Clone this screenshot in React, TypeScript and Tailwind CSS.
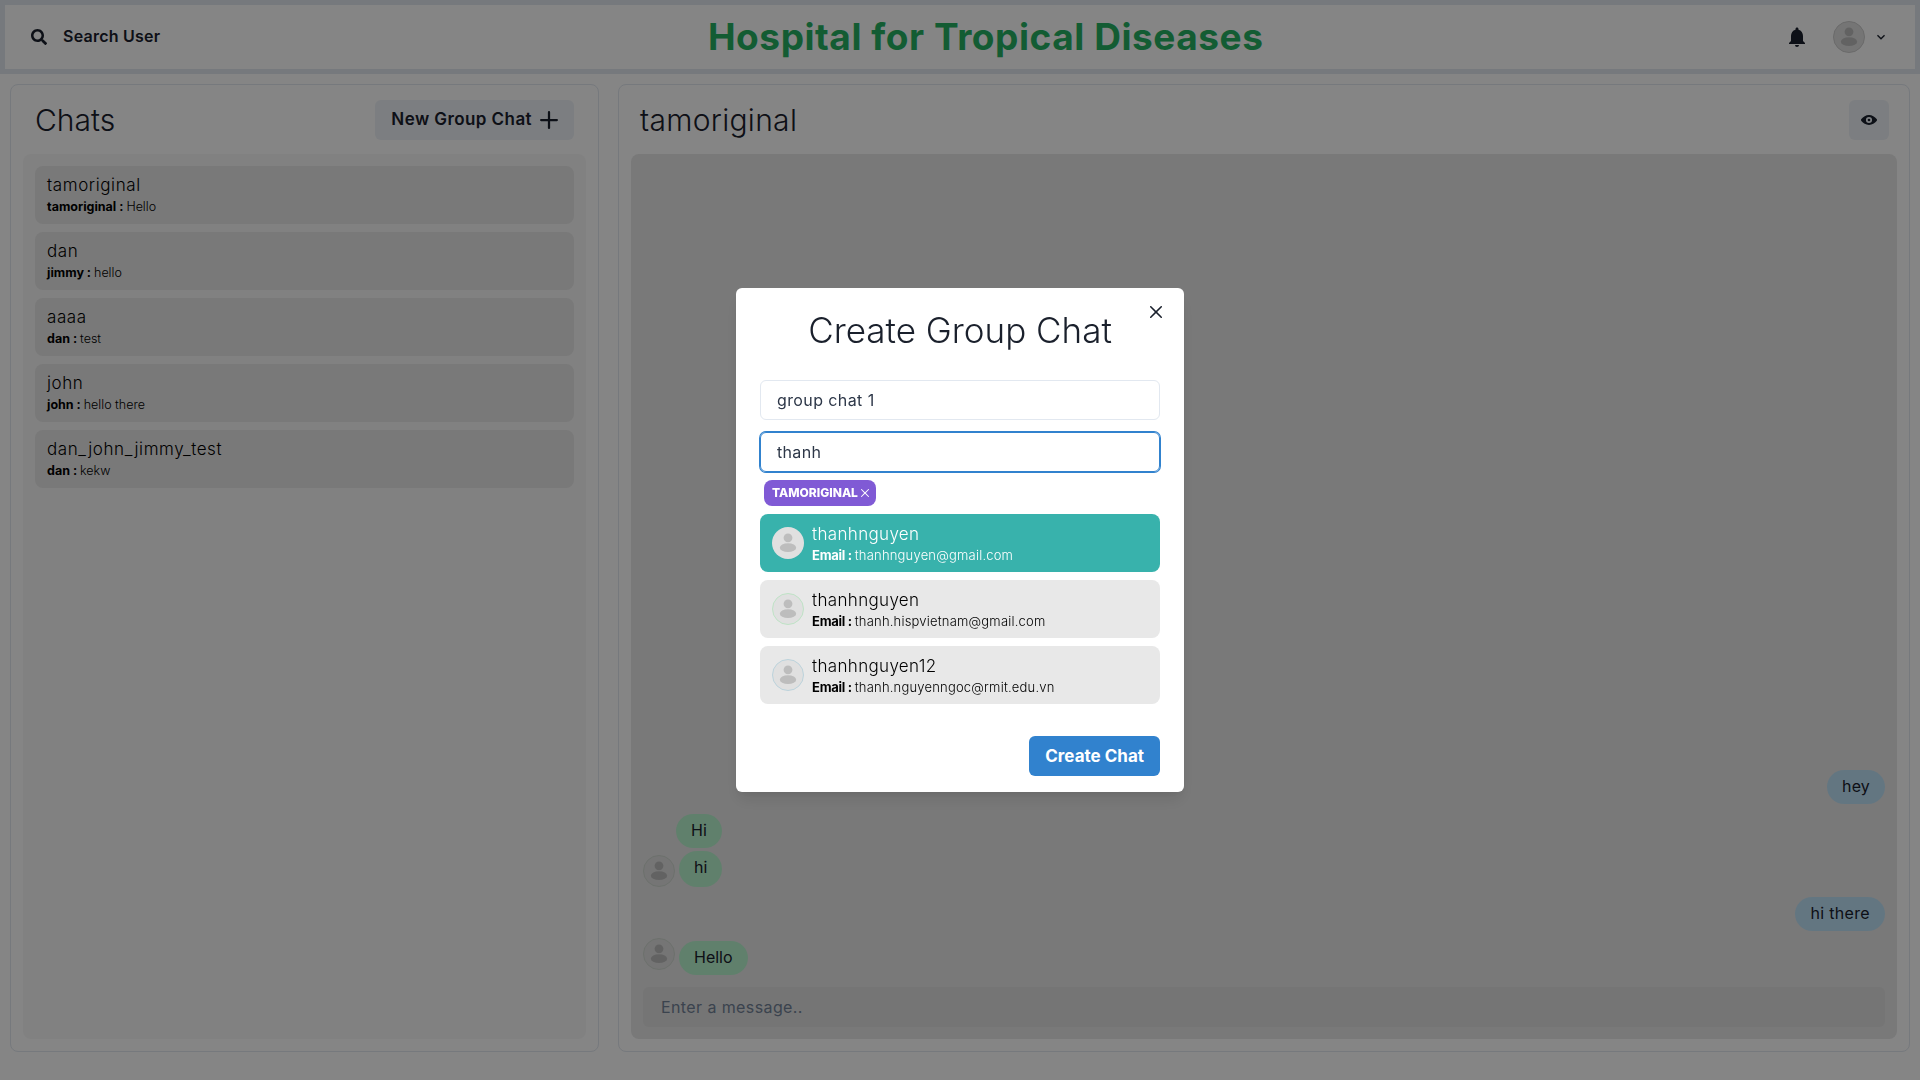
import { FaSearch } from "react-icons/fa";
import { MdNotifications } from "react-icons/md";

const sans = "font-['Inter',sans-serif]";

function Avatar({ ring = "border-transparent", size = "w-8 h-8" }: { ring?: string; size?: string }) {
  return (
    <div className={`${size} shrink-0 rounded-full border bg-[#e0e0e0] ${ring}`}>
      <svg viewBox="0 0 32 32" className="w-full h-full">
        <circle cx="16" cy="10.5" r="4.7" fill="#bdbdbd" />
        <ellipse cx="16" cy="21" rx="8.7" ry="4.7" fill="#bdbdbd" />
      </svg>
    </div>
  );
}

function CloseIcon({ className }: { className: string }) {
  return (
    <svg viewBox="0 0 24 24" className={className} fill="currentColor">
      <path d="M.439,21.44a1.5,1.5,0,0,0,2.122,2.121L11.823,14.3a.25.25,0,0,1,.354,0l9.262,9.263a1.5,1.5,0,1,0,2.122-2.121L14.3,12.177a.25.25,0,0,1,0-.354l9.263-9.262A1.5,1.5,0,0,0,21.439.44L12.177,9.7a.25.25,0,0,1-.354,0L2.561.44A1.5,1.5,0,0,0,.439,2.561L9.7,11.823a.25.25,0,0,1,0,.354Z" />
    </svg>
  );
}

const chats = [
  { name: "tamoriginal", from: "tamoriginal", text: "Hello" },
  { name: "dan", from: "jimmy", text: "hello" },
  { name: "aaaa", from: "dan", text: "test" },
  { name: "john", from: "john", text: "hello there" },
  { name: "dan_john_jimmy_test", from: "dan", text: "kekw" },
];

const results = [
  { name: "thanhnguyen", email: "thanhnguyen@gmail.com", active: true, ring: "border-transparent" },
  { name: "thanhnguyen", email: "thanh.hispvietnam@gmail.com", active: false, ring: "border-[#bfe3c6]" },
  { name: "thanhnguyen12", email: "thanh.nguyenngoc@rmit.edu.vn", active: false, ring: "border-[#bcd3dc]" },
];

export default function App() {
  return (
    <div className={`${sans} relative h-[1080px] w-full overflow-hidden bg-white text-[#1a202c]`}>
      {/* Header */}
      <header className="h-[74px] border-[5px] border-[#e2e8f0] flex items-center justify-between px-[10px] bg-white">
        <button className="flex items-center gap-4 px-4 h-10 font-semibold text-base tracking-[0.015em]">
          <FaSearch className="w-4 h-4" />
          <span className="pb-[2px]">Search User</span>
        </button>
        <h1 className="ml-[10px] text-[37px] font-bold tracking-[0.015em] text-[#26b162]">Hospital for Tropical Diseases</h1>
        <div className="flex items-center">
          <MdNotifications className="w-6 h-6" />
          <div className="ml-6 flex items-center gap-2 pr-4">
            <Avatar ring="border-[#cccccc]" />
            <svg viewBox="0 0 24 24" className="w-4 h-4" fill="currentColor">
              <path d="M16.59 8.59L12 13.17 7.41 8.59 6 10l6 6 6-6z" />
            </svg>
          </div>
        </div>
      </header>

      {/* Panels */}
      <main className="flex justify-between h-[988px] p-[10px]">
        <section className="w-[589px] flex flex-col items-center p-3 rounded-lg border border-[#e2e8f0] bg-white">
          <div className="w-full flex items-center justify-between pb-3 px-3">
            <h2 className="pt-[2px] text-[30px] leading-[43px] font-light">Chats</h2>
            <button className="flex items-center gap-2 h-10 px-4 rounded-md bg-[#edf2f7] font-semibold text-[17px] tracking-[0.025em]">
              New Group Chat
              <svg viewBox="0 0 24 24" className="w-[18px] h-[18px]" fill="currentColor">
                <path d="M0,12a1.5,1.5,0,0,0,1.5,1.5h8.75a.25.25,0,0,1,.25.25V22.5a1.5,1.5,0,0,0,3,0V13.75a.25.25,0,0,1,.25-.25H22.5a1.5,1.5,0,0,0,0-3H13.75a.25.25,0,0,1-.25-.25V1.5a1.5,1.5,0,0,0-3,0v8.75a.25.25,0,0,1-.25.25H1.5A1.5,1.5,0,0,0,0,12Z" />
              </svg>
            </button>
          </div>
          <div className="w-full flex-1 flex flex-col gap-2 p-3 rounded-lg bg-[#f8f8f8]">
            {chats.map((c) => (
              <div key={c.name} className="h-[58px] px-3 pt-[6px] rounded-lg bg-[#e8e8e8] text-black">
                <p className="text-[17px] leading-[26px] font-light tracking-[0.035em]">{c.name}</p>
                <p className="text-[12.5px] leading-[18px] font-light">
                  <b className="font-bold">{c.from} : </b>
                  {c.text}
                </p>
              </div>
            ))}
          </div>
        </section>

        <section className="w-[1292px] flex flex-col items-center p-3 rounded-lg border border-[#e2e8f0] bg-white">
          <div className="w-full flex items-center justify-between pb-3 pl-[9px] pr-2">
            <h2 className="pt-[2px] text-[30px] leading-[43px] font-light tracking-[0.01em]">tamoriginal</h2>
            <button className="w-10 h-10 flex items-center justify-center rounded-md bg-[#edf2f7]">
              <svg viewBox="0 0 24 24" className="w-4 h-4" fill="currentColor">
                <path d="M23.432,10.524C20.787,7.614,16.4,4.538,12,4.6,7.6,4.537,3.213,7.615.568,10.524a2.211,2.211,0,0,0,0,2.948C3.182,16.351,7.507,19.4,11.839,19.4h.308c4.347,0,8.671-3.049,11.288-5.929A2.21,2.21,0,0,0,23.432,10.524ZM7.4,12A4.6,4.6,0,1,1,12,16.6,4.6,4.6,0,0,1,7.4,12Z" />
                <circle cx="12" cy="12" r="2" />
              </svg>
            </button>
          </div>
          <div className="w-full flex-1 flex flex-col justify-end p-3 rounded-lg bg-[#e8e8e8]">
            <div className="self-end h-[34px] px-[15px] leading-[33px] tracking-[0.01em] rounded-[20px] bg-[#bee3f8]">hey</div>
            <div className="mt-[10px] ml-[33px] self-start h-[34px] px-[15px] leading-[33px] rounded-[20px] bg-[#b9f5d0]">Hi</div>
            <div className="mt-[3px] flex items-end gap-1">
              <Avatar ring="border-[#d0d8d0]" />
              <div className="h-[36px] px-[15px] leading-[33px] rounded-[20px] bg-[#b9f5d0]">hi</div>
            </div>
            <div className="mt-[10px] self-end h-[34px] px-[15px] leading-[33px] tracking-[0.02em] rounded-[20px] bg-[#bee3f8]">hi there</div>
            <div className="mt-[7px] flex items-start gap-1">
              <Avatar ring="border-[#d0d8d0]" />
              <div className="mt-[3px] h-[34px] px-[15px] leading-[33px] rounded-[20px] bg-[#b9f5d0]">Hello</div>
            </div>
            <div className="mt-3 h-10 pl-[18px] flex items-center rounded-md bg-[#e0e0e0] text-[#718096] tracking-[0.025em]">Enter a message..</div>
          </div>
        </section>
      </main>

      {/* Modal */}
      <div className="fixed inset-0 bg-black/48 flex items-center justify-center">
        <div className="relative w-[448px] h-[504px] rounded-md bg-white px-6 shadow-[0_10px_15px_-3px_rgba(0,0,0,0.1),0_4px_6px_-2px_rgba(0,0,0,0.05)]">
          <button className="absolute top-2 right-3 w-8 h-8 flex items-center justify-center">
            <CloseIcon className="w-3 h-3" />
          </button>
          <h2 className="pt-4 pb-3 text-center text-[35px] leading-[52px] font-light">Create Group Chat</h2>
          <div className="mt-3 h-10 px-4 flex items-center rounded-md border border-[#e2e8f0] text-[#2d3748] tracking-[0.025em]">group chat 1</div>
          <div className="mt-3 h-10 px-4 flex items-center rounded-md border border-[#3182ce] shadow-[0_0_0_1px_#3182ce] text-[#2d3748] tracking-[0.02em]">thanh</div>
          <div className="mt-2 ml-1 w-fit h-[26px] pl-2 pr-[7px] flex items-center gap-[3px] rounded-lg bg-[#805ad5] text-white text-xs font-extrabold">
            TAMORIGINAL
            <CloseIcon className="w-2 h-2" />
          </div>
          <div className="mt-2 flex flex-col gap-2">
            {results.map((r) => (
              <div
                key={r.email}
                className={r.active ? "h-[58px] px-3 flex items-center gap-2 rounded-lg bg-[#38b2ac] text-white" : "h-[58px] px-3 flex items-center gap-2 rounded-lg bg-[#e8e8e8] text-black"}
              >
                <Avatar ring={r.ring} />
                <div>
                  <p className="text-[17px] leading-6 font-light tracking-[0.02em]">{r.name}</p>
                  <p className="text-[13px] leading-[18px] font-light tracking-[0.015em]">
                    <b className="font-bold tracking-[-0.02em]">Email : </b>
                    {r.email}
                  </p>
                </div>
              </div>
            ))}
          </div>
          <div className="absolute right-6 bottom-4">
            <button className="h-10 pt-[1px] px-4 rounded-md bg-[#3182ce] text-white font-bold text-[17px]">Create Chat</button>
          </div>
        </div>
      </div>
    </div>
  );
}
